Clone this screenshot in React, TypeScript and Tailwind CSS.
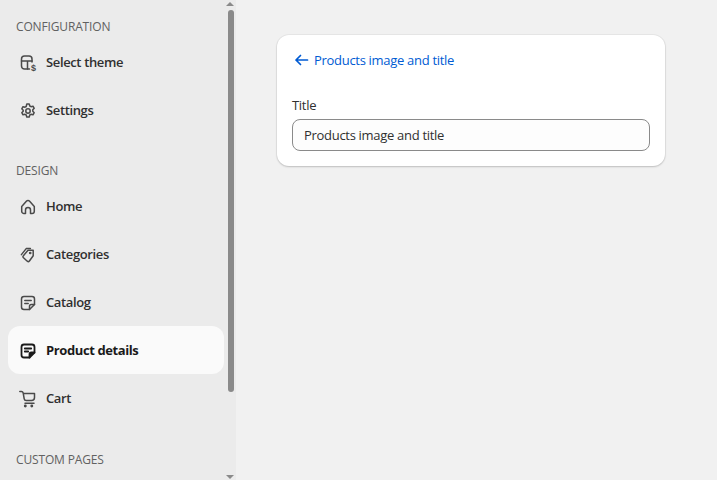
function Base({ children }: { children: React.ReactNode }) {
  return (
    <svg width="20" height="20" viewBox="0 0 20 20" fill="none" stroke="#4a4a4a" strokeWidth="1.5" strokeLinecap="round" strokeLinejoin="round">
      {children}
    </svg>
  );
}
const ThemeIcon = () => (
  <Base>
    <path d="M11.5 16H6.5A3 3 0 0 1 3.5 13V6A3 3 0 0 1 6.5 3h4.5A3 3 0 0 1 14 6v3" />
    <path d="M3.5 8h10.5M9.5 8v8" />
    <text x="13" y="18.4" fontSize="9" fontWeight="700" fill="#4a4a4a" stroke="none" fontFamily="Liberation Sans">$</text>
  </Base>
);
const GearIcon = () => (
  <Base>
    <circle cx="10" cy="10" r="2.2" />
    <path d="M8.8 3h2.4l.6 2 1.2.7 2-.5 1.2 2.1-1.4 1.5v1.4l1.4 1.5-1.2 2.1-2-.5-1.2.7-.6 2H8.8l-.6-2-1.2-.7-2 .5-1.2-2.1 1.4-1.5V9.3L3.8 7.8 5 5.7l2 .5 1.2-.7z" />
  </Base>
);
const HomeIcon = () => (
  <Base>
    <path d="M3.7 9.5 8.6 4a1.9 1.9 0 0 1 2.8 0l4.9 5.5v4.7a2.3 2.3 0 0 1-2.3 2.3H12.5V13a2.5 2.5 0 0 0-5 0v3.5H6a2.3 2.3 0 0 1-2.3-2.3z" />
  </Base>
);
const TagIcon = () => (
  <Base>
    <path d="M10 5.2h5.2v5.5L11.4 16a1.5 1.5 0 0 1-2.1.2l-3.8-3.4a1.5 1.5 0 0 1-.1-2.1z" />
    <path d="M3.4 9.6 8.2 3.6h4.2" />
    <circle cx="12.2" cy="8" r=".6" />
  </Base>
);
const NoteIcon = ({ dark }: { dark?: boolean }) => (
  <svg width="20" height="20" viewBox="0 0 20 20" fill="none" stroke={dark ? "#1a1a1a" : "#4a4a4a"} strokeWidth={dark ? 1.8 : 1.5} strokeLinecap="round" strokeLinejoin="round">
    <path d="M11.5 16.5H6a2.5 2.5 0 0 1-2.5-2.5V6A2.5 2.5 0 0 1 6 3.5h8A2.5 2.5 0 0 1 16.5 6v5.5z" />
    <path d="M6.8 7.5h6.4M6.8 10.5h3.4" />
    <path d="M16.5 11.5h-3.2a1.8 1.8 0 0 0-1.8 1.8v3.2" fill={dark ? "#1a1a1a" : "none"} />
  </svg>
);
const CartIcon = () => (
  <Base>
    <path d="M1.8 2.6h1.7c.8 0 1.4.5 1.6 1.2l.2.8m0 0h11.2v3.9a3 3 0 0 1-3 3H8.2a2 2 0 0 1-2-1.7zM7 14.2h9" />
    <circle cx="7.3" cy="17" r=".7" fill="#4a4a4a" />
    <circle cx="13.8" cy="17" r=".7" fill="#4a4a4a" />
  </Base>
);

function Label({ children, className }: { children: string; className: string }) {
  return <div className={`px-4 text-[12px] leading-4 font-medium tracking-[-0.15px] text-[#616161] ${className}`}>{children}</div>;
}
function Row({ icon, label, active }: { icon: React.ReactNode; label: string; active?: boolean }) {
  return (
    <div className={`mx-2 flex h-12 w-[216px] items-center gap-[8px] rounded-[12px] pl-[10px] pt-[2px] text-[13px] ${active ? "bg-[#fafafa] font-bold tracking-[-0.4px] text-[#1a1a1a]" : "font-semibold tracking-[-0.37px] text-[#303030]"}`}>
      {icon}
      <span>{label}</span>
    </div>
  );
}

export default function App() {
  return (
    <div className="flex h-[480px] w-[717px] overflow-hidden bg-[#f1f1f1] font-['Open_Sans','Noto_Sans',sans-serif]">
      <aside className="relative h-full w-[236px] shrink-0 overflow-hidden bg-[#ebebeb]">
        <Label className="pt-[19px]">CONFIGURATION</Label>
        <div className="mt-[3px]">
          <Row icon={<ThemeIcon />} label="Select theme" />
          <Row icon={<GearIcon />} label="Settings" />
        </div>
        <Label className="pt-[29px]">DESIGN</Label>
        <div className="mt-[3px]">
          <Row icon={<HomeIcon />} label="Home" />
          <Row icon={<TagIcon />} label="Categories" />
          <Row icon={<NoteIcon />} label="Catalog" />
          <Row icon={<NoteIcon dark />} label="Product details" active />
          <Row icon={<CartIcon />} label="Cart" />
        </div>
        <Label className="pt-[30px]">CUSTOM PAGES</Label>
        <div className="absolute right-[2px] top-[10px] h-[382px] w-[6px] rounded-[3px] bg-[#8a8a8a]" />
        <div className="absolute right-[2px] top-[2px] h-0 w-0 border-x-[4px] border-b-[4px] border-x-transparent border-b-[#8a8a8a]" />
        <div className="absolute bottom-[1px] right-[2px] h-0 w-0 border-x-[4px] border-t-[4px] border-x-transparent border-t-[#8a8a8a]" />
      </aside>
      <main className="flex-1 pl-[41px] pt-[35px]">
        <section className="h-[131px] w-[388px] rounded-[12px] bg-white px-[15px] shadow-[0_1px_2px_rgba(0,0,0,0.18),0_0_0_1px_rgba(0,0,0,0.04)]">
          <div className="flex h-[50px] items-center gap-[4px] pt-[1px] text-[13px] tracking-[-0.3px] text-[#005bd3]">
            <svg width="17" height="17" viewBox="0 0 17 17" fill="none" stroke="#005bd3" strokeWidth="1.7" strokeLinecap="round" strokeLinejoin="round" className="ml-[1px]">
              <path d="M14.5 8H3M7.5 3.5 3 8l4.5 4.5" />
            </svg>
            <span>Products image and title</span>
          </div>
          <div className="pt-[11px] text-[13px] leading-[18px] tracking-[-0.3px] text-[#303030]">Title</div>
          <div className="mt-[5px] flex h-[32px] w-[358px] items-center rounded-[8px] border border-[#8a8a8a] bg-[#fdfdfd] px-[11px] pt-[1px] text-[13px] tracking-[-0.3px] text-[#303030]">
            Products image and title
          </div>
        </section>
      </main>
    </div>
  );
}
